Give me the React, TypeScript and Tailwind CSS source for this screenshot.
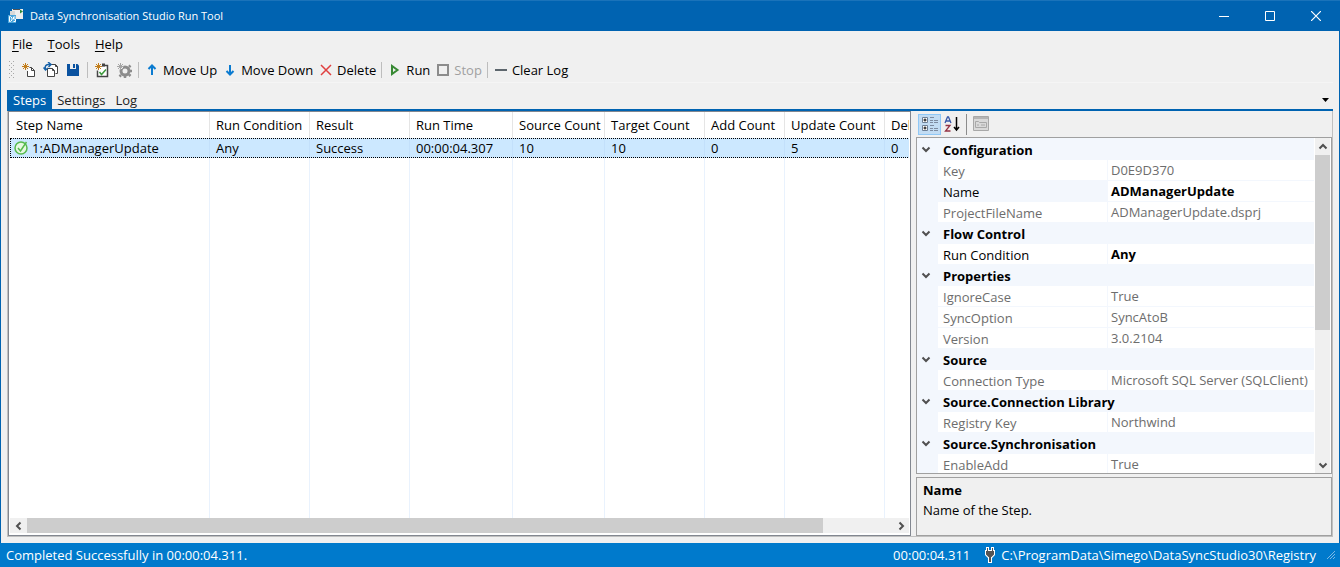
import { ReactNode } from 'react';

const columns = [
  { title: 'Step Name', width: 200 },
  { title: 'Run Condition', width: 100 },
  { title: 'Result', width: 100 },
  { title: 'Run Time', width: 103 },
  { title: 'Source Count', width: 92 },
  { title: 'Target Count', width: 100 },
  { title: 'Add Count', width: 80 },
  { title: 'Update Count', width: 100 },
  { title: 'Delete Count', width: 95 },
];

const steps = [['1:ADManagerUpdate', 'Any', 'Success', '00:00:04.307', '10', '10', '0', '5', '0']];

type Prop = { name: string; value: string; editable?: boolean; selected?: boolean };

const groups: { title: string; props: Prop[] }[] = [
  {
    title: 'Configuration',
    props: [
      { name: 'Key', value: 'D0E9D370' },
      { name: 'Name', value: 'ADManagerUpdate', editable: true, selected: true },
      { name: 'ProjectFileName', value: 'ADManagerUpdate.dsprj' },
    ],
  },
  { title: 'Flow Control', props: [{ name: 'Run Condition', value: 'Any', editable: true }] },
  {
    title: 'Properties',
    props: [
      { name: 'IgnoreCase', value: 'True' },
      { name: 'SyncOption', value: 'SyncAtoB' },
      { name: 'Version', value: '3.0.2104' },
    ],
  },
  { title: 'Source', props: [{ name: 'Connection Type', value: 'Microsoft SQL Server (SQLClient)' }] },
  { title: 'Source.Connection Library', props: [{ name: 'Registry Key', value: 'Northwind' }] },
  { title: 'Source.Synchronisation', props: [{ name: 'EnableAdd', value: 'True' }] },
];

function Icon({ size = 16, children }: { size?: number; children: ReactNode }) {
  return (
    <svg width={size} height={size} viewBox={`0 0 ${size} ${size}`} fill="none" className="shrink-0" aria-hidden="true">
      {children}
    </svg>
  );
}

// Orange (or grey) "new item" burst in the top left corner of an icon
function Spark({ color = '#c27d1a' }: { color?: string }) {
  return <path d="M4.5 1v7M1 4.500h7M2 2l5 5M7 2l-5 5" stroke={color} strokeWidth="1" />;
}

function Chevron({ dir }: { dir: 'up' | 'down' | 'left' | 'right' }) {
  const paths = {
    up: 'M1.5 6.5L5 3l3.5 3.5',
    down: 'M1.5 3.5L5 7l3.5-3.5',
    left: 'M6.5 1.5L3 5l3.5 3.5',
    right: 'M3.5 1.5L7 5l-3.5 3.5',
  };
  return (
    <Icon size={10}>
      <path d={paths[dir]} stroke="#505050" strokeWidth="2" />
    </Icon>
  );
}

function Separator() {
  return <span className="h-4 w-px shrink-0 bg-[#bdbdbd]" />;
}

function ToolButton({ label, icon, disabled }: { label: string; icon: ReactNode; disabled?: boolean }) {
  return (
    <button type="button" disabled={disabled} className="flex items-center gap-[3px] whitespace-nowrap disabled:text-[#a0a0a0]">
      {icon}
      {label}
    </button>
  );
}

function TitleBar() {
  return (
    <header className="flex h-[31px] shrink-0 items-center border-t border-[#1a73ba] bg-[#0063b1] pr-px pl-2 text-[11px] text-white">
      <Icon>
        <path d="M4 1h11v10H7V6H4z" fill="#eee" />
        <path d="M2 3h5v4H2z" fill="#d8d8d8" />
        <path d="M5 1h7v1H5z" fill="#555" />
        <path d="M12 1.500v4l3-2z" fill="#2c8a3c" />
        <path d="M0 7h8v8H0z" fill="#4aa5dc" />
        <path d="M1.500 8.500v5h1l1.500-1.500v-2l-1.500-1.500zM7.500 9H5.500v2h2v2.500h-2" stroke="#fff" />
      </Icon>
      <h1 className="ml-[6px] flex-1">Data Synchronisation Studio Run Tool</h1>
      <button type="button" aria-label="Minimize" className="flex h-full w-[46px] items-center justify-center">
        <Icon size={10}>
          <path d="M0 5.500h10" stroke="#fff" />
        </Icon>
      </button>
      <button type="button" aria-label="Maximize" className="flex h-full w-[46px] items-center justify-center">
        <Icon size={10}>
          <path d="M0.500 0.500h9v9h-9z" stroke="#fff" />
        </Icon>
      </button>
      <button type="button" aria-label="Close" className="flex h-full w-[46px] items-center justify-center">
        <Icon size={10}>
          <path d="M0 0l10 10M10 0L0 10" stroke="#fff" strokeWidth="1.200" />
        </Icon>
      </button>
    </header>
  );
}

function MenuBar() {
  return (
    <nav className="flex h-[26px] shrink-0 items-center gap-[15px] pl-[5px]">
      {['File', 'Tools', 'Help'].map((item) => (
        <button key={item} type="button">
          <span className="underline underline-offset-2">{item[0]}</span>
          {item.slice(1)}
        </button>
      ))}
    </nav>
  );
}

function Toolbar() {
  return (
    <div role="toolbar" className="flex h-[26px] shrink-0 items-center border-b border-[#f5f5f5]">
      <svg width="6" height="18" className="ml-[2px] shrink-0" aria-hidden="true">
        <defs>
          <pattern id="grip" width="4" height="4" patternUnits="userSpaceOnUse">
            <path d="M0 0h1v1H0zM2 2h1v1H2z" fill="#a8a8a8" />
          </pattern>
        </defs>
        <rect width="5" height="17" fill="url(#grip)" />
      </svg>
      <div className="ml-[6px] flex items-center gap-[6px]">
        <button type="button" aria-label="New">
          <Icon>
            <Spark />
            <path d="M6.500 9v5.500h7v-6l-3-3H8.500" fill="#fff" stroke="#444" />
            <path d="M10.500 5.500v3h3" stroke="#444" />
          </Icon>
        </button>
        <button type="button" aria-label="Open">
          <Icon>
            <path d="M6.500 3.500V2.500h6l2 2v7h-2" fill="#fff" stroke="#444" />
            <path d="M4.500 6.500h5l2 2v6h-7z" fill="#fff" stroke="#444" />
            <path d="M9.500 6.500v2h2M12.500 2.500v2h2" stroke="#444" />
            <path d="M2.500 8C1.500 4 3 2 7 2.500M5 0l3 2.500L5.500 5M0.500 5.500l2 2.500L5 6" stroke="#1560a8" strokeWidth="1.500" />
          </Icon>
        </button>
        <button type="button" aria-label="Save">
          <Icon>
            <path d="M2 2h10.500L14 3.500V14H2z" fill="#0a52a0" />
            <path d="M5 2h6v5H5z" fill="#f0f0f0" />
            <path d="M8 2h2v4H8z" fill="#0a52a0" />
          </Icon>
        </button>
        <Separator />
        <button type="button" aria-label="New step">
          <Icon>
            <path d="M8 3.500h5.500v11h-10V8.500" fill="#fff" stroke="#444" strokeWidth="1.500" />
            <path d="M8 1.500h3v3H8z" fill="#444" />
            <path d="M5.500 10l2 2.500L12 7.500" stroke="#3d9a3d" strokeWidth="1.500" />
            <Spark />
          </Icon>
        </button>
        <button type="button" aria-label="Step settings">
          <Icon>
            <circle cx="9" cy="9" r="4" stroke="#8c8c8c" strokeWidth="3" />
            <path
              d="M9 14v2M13 12.500l1.500 1.500M14 9h2M13 5l1.500-1.500M5 13l-1.500 1.500"
              stroke="#8c8c8c"
              strokeWidth="2.500"
            />
            <path d="M0 0h7v7H0z" fill="#f0f0f0" />
            <Spark color="#a5a5a5" />
          </Icon>
        </button>
        <Separator />
      </div>
      <div className="ml-[5px] flex items-center gap-[5px]">
        <ToolButton
          label="Move Up"
          icon={
            <Icon>
              <path d="M8 13V4M4.500 7L8 3.500 11.500 7" stroke="#0b7bd0" strokeWidth="2" />
            </Icon>
          }
        />
        <ToolButton
          label="Move Down"
          icon={
            <Icon>
              <path d="M8 3v9M4.500 9L8 12.500 11.500 9" stroke="#0b7bd0" strokeWidth="2" />
            </Icon>
          }
        />
        <ToolButton
          label="Delete"
          icon={
            <Icon>
              <path d="M3 3l10 10M13 3L3 13" stroke="#e04040" strokeWidth="1.500" />
            </Icon>
          }
        />
        <Separator />
        <ToolButton
          label="Run"
          icon={
            <Icon>
              <path d="M5 4v8L10.500 8z" stroke="#388a34" strokeWidth="2" />
            </Icon>
          }
        />
        <ToolButton
          label="Stop"
          disabled
          icon={
            <Icon>
              <path d="M3 3h10v10H3z" stroke="#8c8c8c" strokeWidth="2" />
            </Icon>
          }
        />
        <Separator />
        <ToolButton
          label="Clear Log"
          icon={
            <Icon>
              <path d="M2 8h12" stroke="#5d666d" strokeWidth="2" />
            </Icon>
          }
        />
      </div>
    </div>
  );
}

function Tabs() {
  return (
    <div className="mt-[7px] flex h-[21px] shrink-0 items-stretch border-b-2 border-[#0063b1]">
      <div role="tablist" className="flex flex-1">
        <button type="button" role="tab" aria-selected="true" className="bg-[#0063b1] px-[6px] text-white">
          Steps
        </button>
        <button type="button" role="tab" aria-selected="false" className="px-[5px] text-[#222]">
          Settings
        </button>
        <button type="button" role="tab" aria-selected="false" className="px-[5px] text-[#222]">
          Log
        </button>
      </div>
      <button type="button" aria-label="Tab list" className="mr-1 flex items-center">
        <svg width="7" height="4" aria-hidden="true">
          <path d="M0 0h7L3.500 4z" fill="#000" />
        </svg>
      </button>
    </div>
  );
}

function StepList() {
  return (
    <section className="flex min-w-0 flex-1 flex-col border border-[#828790] bg-white px-px pb-[2px]">
      <div className="min-h-0 flex-1 overflow-hidden">
        <table className="h-full w-[970px] table-fixed border-separate border-spacing-0 text-left">
          <colgroup>
            {columns.map((c) => (
              <col key={c.title} style={{ width: c.width }} />
            ))}
          </colgroup>
          <thead>
            <tr className="h-[26px]">
              {columns.map((c) => (
                <th key={c.title} className="border-r border-[#e5e5e5] p-0 pl-[6px] font-normal whitespace-nowrap">
                  {c.title}
                </th>
              ))}
            </tr>
          </thead>
          <tbody>
            {steps.map((row) => (
              <tr key={row[0]} className="h-5 bg-[#cce8ff] outline-1 -outline-offset-1 outline-dotted outline-black">
                {row.map((cell, i) => (
                  <td key={i} className="border-r border-[#c3e0fb] p-0 pl-[6px] whitespace-nowrap">
                    {i === 0 ? (
                      <span className="-ml-[3px] flex items-center gap-[3px]">
                        <Icon>
                          <circle cx="8" cy="8" r="6" fill="#e6f8e0" stroke="#57bb4e" strokeWidth="1.500" />
                          <path d="M5 8l2.500 3L13.500 2" stroke="#57bb4e" strokeWidth="1.500" />
                        </Icon>
                        {cell}
                      </span>
                    ) : (
                      cell
                    )}
                  </td>
                ))}
              </tr>
            ))}
            <tr>
              {columns.map((c) => (
                <td key={c.title} className="border-r border-[#e9f2fd] p-0" />
              ))}
            </tr>
          </tbody>
        </table>
      </div>
      <div className="flex h-[15px] shrink-0 bg-[#f0f0f0]">
        <button type="button" aria-label="Scroll left" className="flex w-[17px] items-center justify-center">
          <Chevron dir="left" />
        </button>
        <div className="flex-1">
          <div className="h-full w-[92%] bg-[#cdcdcd]" />
        </div>
        <button type="button" aria-label="Scroll right" className="flex w-[17px] items-center justify-center">
          <Chevron dir="right" />
        </button>
      </div>
    </section>
  );
}

function PropertyToolbar() {
  return (
    <div role="toolbar" className="flex h-[26px] shrink-0 items-center pl-[2px]">
      <button
        type="button"
        aria-label="Categorized"
        aria-pressed="true"
        className="flex h-[21px] w-[23px] items-center justify-center border border-[#90c8f6] bg-[#c2dcf3]"
      >
        <Icon>
          <path d="M0.500 1.500h5v5h-5zM0.500 9.500h5v5h-5z" fill="#fff" stroke="#6c7f95" />
          <path d="M1.500 4h3M3 2.500v3M1.500 12h3M3 10.500v3" stroke="#000" />
          <path
            d="M8 1.500h4M8 4.500h3M8 6.500h3M8 9.500h4M8 12.500h3M8 14.500h3M12 4.500h4M12 6.500h4M12 12.500h4M12 14.500h4"
            stroke="#7d8ba0"
          />
        </Icon>
      </button>
      <button type="button" aria-label="Alphabetical" className="flex h-[21px] w-[22px] items-center justify-center">
        <Icon>
          <path d="M1 7l2.500-6h1L7 7M2 5h4" stroke="#3858a8" strokeWidth="1.300" />
          <path d="M1.500 9.500h4.500L1.500 15H6.500" stroke="#943244" strokeWidth="1.300" />
          <path d="M12.500 1v13M10 11l2.500 3 2.500-3" stroke="#000" strokeWidth="1.500" />
        </Icon>
      </button>
      <span className="mr-[2px] ml-[3px] h-[21px] w-px bg-[#8c8c8c]" />
      <button type="button" aria-label="Property pages" disabled className="flex w-[23px] items-center justify-center">
        <Icon>
          <path d="M0.500 0.500h15v14h-15z" fill="#d9d9d9" stroke="#a8a8a8" />
          <path d="M1 2h14" stroke="#b5b5b5" strokeWidth="2" />
          <path d="M2.500 11.500v-6h3l1 1h7v5zM4 9h2M8 9h4" stroke="#a8a8a8" />
        </Icon>
      </button>
    </div>
  );
}

function PropertyGrid() {
  return (
    <div className="flex min-h-0 flex-1 border border-[#a0a0a0] bg-white pr-px">
      <div className="mr-px min-w-0 flex-1 overflow-hidden bg-[#f3f7fd] pt-px">
        <table className="w-full table-fixed border-separate border-spacing-0 text-left text-[#6d6d6d]">
          <colgroup>
            <col className="w-[21px]" />
            <col className="w-[169px]" />
            <col />
          </colgroup>
          {groups.map((group) => (
            <tbody key={group.title}>
              <tr className="h-[21px]">
                <td className="p-0 pb-[2px] pl-1">
                  <button type="button" aria-label={`Collapse ${group.title}`} className="flex">
                    <Chevron dir="down" />
                  </button>
                </td>
                <th colSpan={2} className="p-0 pl-[5px] font-bold text-black">
                  {group.title}
                </th>
              </tr>
              {group.props.map((prop) => (
                <tr key={prop.name} className="h-[21px]">
                  <td className="p-0" />
                  <td
                    className={`border-b border-[#f3f7fd] p-0 pt-[2px] pl-[5px] ${prop.selected ? '' : 'bg-white'} ${
                      prop.editable ? 'text-black' : ''
                    }`}
                  >
                    {prop.name}
                  </td>
                  <td
                    className={`border-b border-l border-[#f3f7fd] bg-white p-0 pl-[3px] whitespace-nowrap ${
                      prop.editable ? 'font-bold text-black' : ''
                    }`}
                  >
                    {prop.value}
                  </td>
                </tr>
              ))}
            </tbody>
          ))}
        </table>
      </div>
      <div className="flex w-[15px] shrink-0 flex-col bg-[#f0f0f0]">
        <button type="button" aria-label="Scroll up" className="flex h-[17px] items-center justify-center">
          <Chevron dir="up" />
        </button>
        <div className="flex-1">
          <div className="h-[58%] bg-[#cdcdcd]" />
        </div>
        <button type="button" aria-label="Scroll down" className="flex h-[17px] items-center justify-center">
          <Chevron dir="down" />
        </button>
      </div>
    </div>
  );
}

function StatusBar() {
  return (
    <footer className="flex h-6 shrink-0 items-center bg-[#007acc] pl-[6px] text-white">
      <span className="flex-1">Completed Successfully in 00:00:04.311.</span>
      <span>00:00:04.311</span>
      <span className="ml-3 flex items-center gap-[3px]">
        <Icon>
          <path d="M4 0h3v3h2V0h3v3h1v5l-3 3v5H6v-5L3 8V3h1z" fill="#fff" />
          <path d="M5 1h1v3H5zM10 1h1v3h-1zM4 4h8v3.500L9.500 10H9v5H7v-5h-.5L4 7.500z" fill="#555" />
        </Icon>
        C:\ProgramData\Simego\DataSyncStudio30\Registry
      </span>
      <svg width="10" height="10" className="mr-[4px] ml-[10px] shrink-0" aria-hidden="true">
        <path d="M1 9l8-8M4 9l5-5M7 9l2-2" stroke="#7db8e4" />
      </svg>
    </footer>
  );
}

export default function App() {
  return (
    <div className="flex h-screen flex-col overflow-hidden bg-[#f0f0f0] font-['Open_Sans','Noto_Sans',sans-serif] text-[13px] leading-4 text-black">
      <TitleBar />
      <div className="flex min-h-0 flex-1 flex-col border-x border-[#0063b1] px-[6px] pb-[6px]">
        <MenuBar />
        <Toolbar />
        <Tabs />
        <main className="flex min-h-0 flex-1 gap-[5px] border-x border-b border-[#c0c0c0]">
          <StepList />
          <aside className="flex w-[416px] shrink-0 flex-col">
            <PropertyToolbar />
            <PropertyGrid />
            <div className="mt-[3px] h-[59px] shrink-0 border border-[#a0a0a0] px-[6px] pt-[2px] leading-5">
              <h2 className="font-bold">Name</h2>
              <p>Name of the Step.</p>
            </div>
          </aside>
        </main>
      </div>
      <StatusBar />
    </div>
  );
}
